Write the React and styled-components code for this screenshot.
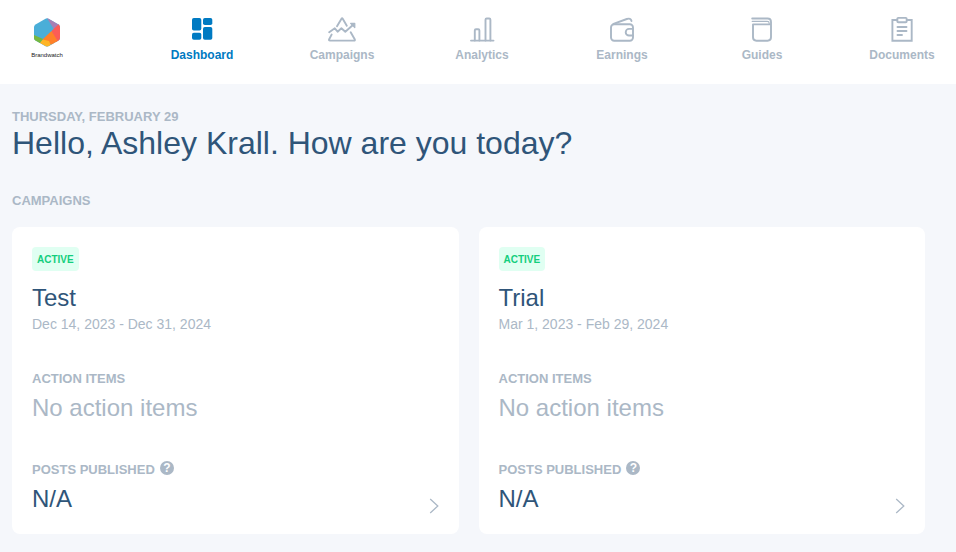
import React from 'react'
import styled, { createGlobalStyle, ThemeProvider } from 'styled-components'

const theme = {
  navy: '#2f5579',
  blue: '#007ac2',
  grey: '#abb8c6',
  green: '#13ce7d',
  mint: '#e0fff2',
  page: '#f5f7fb',
}

const GlobalStyle = createGlobalStyle`
  * {
    box-sizing: border-box;
  }

  body {
    margin: 0;
    background: ${theme.page};
    font-family: "Liberation Sans", Arial, sans-serif;
  }

  h1, h2, h3, p {
    margin: 0;
    font-weight: 400;
  }
`

const Header = styled.header`
  display: flex;
  height: 84px;
  padding: 0 4px 0 20px;
  background: #fff;
`

const Logo = styled.a`
  display: flex;
  flex-direction: column;
  align-items: center;
  width: 54px;
  padding-top: 18px;
  color: #222;
  font-size: 6px;
  line-height: 8px;
  text-decoration: none;

  svg {
    margin-bottom: 4px;
  }
`

const Nav = styled.nav`
  display: flex;
  flex: 1;
  justify-content: space-between;
  margin-left: 78px;
`

const NavLink = styled.a`
  display: flex;
  flex-direction: column;
  align-items: center;
  width: 100px;
  padding-top: 16px;
  color: ${({ theme, $active }) => ($active ? theme.blue : theme.grey)};
  font-size: 12px;
  font-weight: 700;
  line-height: 16px;
  text-decoration: none;

  svg {
    margin-bottom: 4px;
  }
`

const Main = styled.main`
  padding: 24px 31px 18px 12px;
`

const Label = styled.p`
  display: flex;
  color: ${({ theme }) => theme.grey};
  font-size: 13px;
  font-weight: 700;
  line-height: 18px;
  text-transform: uppercase;
`

const Greeting = styled.h1`
  color: ${({ theme }) => theme.navy};
  font-size: 32px;
  line-height: 34px;
  margin-bottom: 32px;
`

const Grid = styled.section`
  display: grid;
  grid-template-columns: 1fr 1fr;
  gap: 20px;
  margin-top: 17px;
`

const Card = styled.article`
  padding: 20px;
  border-radius: 8px;
  background: #fff;
`

const Badge = styled.span`
  display: inline-block;
  padding: 1px 5px 0;
  border-radius: 4px;
  background: ${({ theme }) => theme.mint};
  color: ${({ theme }) => theme.green};
  font-size: 10px;
  font-weight: 700;
  line-height: 23px;
  vertical-align: top;
  text-transform: uppercase;
`

const Title = styled.h2`
  margin-top: 12px;
  color: ${({ theme }) => theme.navy};
  font-size: 24px;
  line-height: 30px;
`

const Dates = styled.p`
  margin-top: 3px;
  color: ${({ theme }) => theme.grey};
  font-size: 14px;
  line-height: 16px;
`

const Stat = styled.div`
  margin-top: 38px;
`

const Value = styled.p`
  margin-top: 5px;
  color: ${({ theme, $muted }) => ($muted ? theme.grey : theme.navy)};
  font-size: 24px;
  line-height: 30px;
`

const Bottom = styled.div`
  display: flex;
  justify-content: space-between;
  align-items: flex-end;
`

const Help = styled.button`
  width: 14px;
  height: 14px;
  margin-left: 5px;
  padding: 0;
  border: 0;
  border-radius: 50%;
  background: ${({ theme }) => theme.grey};
  color: #fff;
  font-family: inherit;
  font-size: 12px;
  font-weight: 700;
  line-height: 14px;
`

const Open = styled.a`
  display: flex;
  color: ${({ theme }) => theme.grey};
`

const Icon = ({ children }) => (
  <svg width="28" height="27" viewBox="0 0 28 27" fill="none" stroke="currentColor" strokeWidth="1.9" strokeLinecap="round" strokeLinejoin="round" aria-hidden="true">
    {children}
  </svg>
)

const icons = {
  Dashboard: (
    <g fill="currentColor" stroke="none">
      <rect x="4" y="2" width="9.3" height="12.6" rx="1.8" />
      <rect x="15" y="2" width="9.3" height="7" rx="1.8" />
      <rect x="4" y="16.7" width="9.3" height="7" rx="1.8" />
      <rect x="15" y="10.9" width="9.3" height="12.8" rx="1.8" />
    </g>
  ),
  Campaigns: (
    <>
      <path d="M9 10.3 L13.5 2.8 Q14.1 1.8 14.7 2.8 L18.8 9.8" />
      <path d="M3.6 18.6 L1.2 23.2 Q.6 24.6 2 24.6 H26 Q27.3 24.6 26.7 23.2 L22.7 16.2" />
      <path d="M1.2 16.3 L6.8 12.3 L9.6 15.7 L13.4 12.3 L17.3 15.8 L25.2 8.8" />
      <path d="M22.6 7.4 H26.8 V11.6 Z" fill="currentColor" strokeWidth="1.2" />
    </>
  ),
  Analytics: (
    <>
      <path d="M3 24.6 H25.5" />
      <path d="M6.8 24.6 V14.5 Q6.8 13.3 8 13.3 H10.2 Q11.4 13.3 11.4 14.5 V24.6" />
      <path d="M17.5 24.6 V3.7 Q17.5 2.5 18.7 2.5 H21.2 Q22.4 2.5 22.4 3.7 V24.6" />
    </>
  ),
  Earnings: (
    <>
      <rect x="3" y="8.2" width="22" height="16.6" rx="3.2" />
      <path d="M5.5 7.8 L18.8 3 Q22.7 1.7 23.5 5" />
      <path d="M24.8 12.9 H21 A3.3 3.3 0 0 0 21 19.5 H24.8" />
    </>
  ),
  Guides: (
    <>
      <path d="M4.2 2.5 H19.6 Q23 2.5 23 5.9 V21.3 Q23 24.7 19.6 24.7 H8.4 Q5 24.7 5 21.3 V8.4 H21.2" />
      <path d="M4.2 5.4 H19.2 Q21.2 5.4 21.2 7.2 V8.2" strokeWidth="1.1" />
    </>
  ),
  Documents: (
    <>
      <path d="M9.3 4 H4.4 V24.7 H23.7 V4 H18.8" strokeLinejoin="miter" />
      <rect x="9.3" y="1.9" width="9.4" height="4.3" rx="1" />
      <path d="M9.5 11 H18.5 M9.5 15 H18.5 M9.5 19 H14" />
    </>
  ),
}

const campaigns = [
  { title: 'Test', dates: 'Dec 14, 2023 - Dec 31, 2024' },
  { title: 'Trial', dates: 'Mar 1, 2023 - Feb 29, 2024' },
]

const Hexagon = () => (
  <svg width="26" height="29" viewBox="0 0 26 29" aria-hidden="true">
    <defs>
      <clipPath id="hexagon">
        <path d="M11.5 .7 Q13 0 14.5 .7 L24.5 6.5 Q26 7.5 26 9 V20 Q26 21.5 24.5 22.5 L14.5 28.2 Q13 29 11.5 28.2 L1.5 22.5 Q0 21.5 0 20 V9 Q0 7.5 1.5 6.5 Z" />
      </clipPath>
    </defs>
    <g clipPath="url(#hexagon)">
      <path d="M0 0 H26 V29 H0 Z" fill="#4aaed8" />
      <path d="M13 0 H26 V7 L20 11.5 Z" fill="#a77fb4" />
      <path d="M26 5 L17.5 13 L22.5 25 L26 24 Z" fill="#fc5c57" />
      <path d="M17.5 13 L8.5 21.5 L18 27 L24 23.5 Z" fill="#ff8129" />
      <path d="M8.5 21.5 L5.5 25 L13 29 L17 27.5 L15 23 Z" fill="#ffb526" />
      <path d="M0 17 L9 21 L5.5 25.5 L0 23 Z" fill="#76b83f" />
    </g>
  </svg>
)

const Campaign = ({ title, dates }) => (
  <Card>
    <Badge>Active</Badge>
    <Title>{title}</Title>
    <Dates>{dates}</Dates>
    <Stat>
      <Label>Action Items</Label>
      <Value $muted>No action items</Value>
    </Stat>
    <Bottom>
      <Stat>
        <Label>
          Posts Published
          <Help type="button" aria-label="About posts published">?</Help>
        </Label>
        <Value>N/A</Value>
      </Stat>
      <Open href="#" aria-label={title}>
        <svg width="10" height="16" viewBox="0 0 10 16" fill="none" stroke="currentColor" strokeWidth="1.3">
          <path d="M1.2 1 L8.8 8 L1.2 15" />
        </svg>
      </Open>
    </Bottom>
  </Card>
)

export default function App() {
  return (
    <ThemeProvider theme={theme}>
      <GlobalStyle />
      <Header>
        <Logo href="#">
          <Hexagon />
          Brandwatch
        </Logo>
        <Nav>
          {Object.keys(icons).map((name) => (
            <NavLink href="#" key={name} $active={name === 'Dashboard'}>
              <Icon>{icons[name]}</Icon>
              {name}
            </NavLink>
          ))}
        </Nav>
      </Header>
      <Main>
        <Label>Thursday, February 29</Label>
        <Greeting>Hello, Ashley Krall. How are you today?</Greeting>
        <Label as="h2">Campaigns</Label>
        <Grid>
          {campaigns.map((campaign) => (
            <Campaign key={campaign.title} {...campaign} />
          ))}
        </Grid>
      </Main>
    </ThemeProvider>
  )
}
